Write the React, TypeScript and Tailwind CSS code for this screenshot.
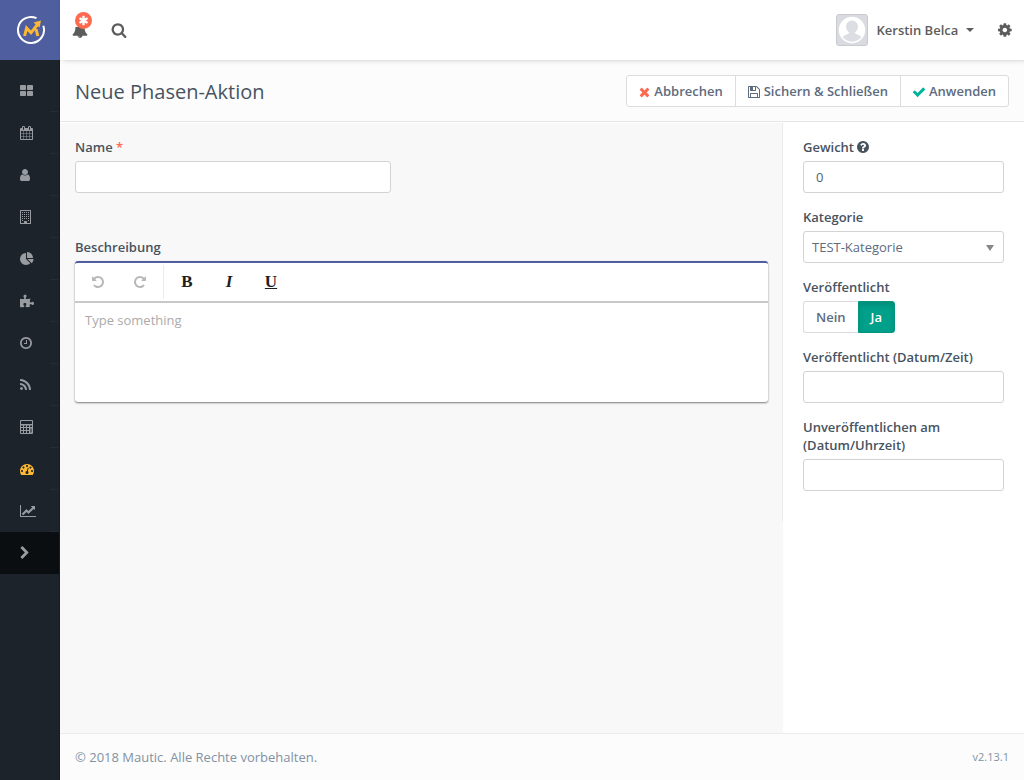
import { useState } from 'react'
import type { ReactNode } from 'react'
import { FaPuzzlePiece } from 'react-icons/fa'

type IconProps = { d: string; x?: number; w?: number; size?: number; className?: string }

// Icons are drawn on a 1792 unit grid, x and w trim the empty sides
function Icon({ d, x = 0, w = 1792, size = 14, className = '' }: IconProps) {
  return (
    <svg
      viewBox={`${x} 0 ${w} 1792`}
      height={size}
      width={(w / 1792) * size}
      fill="currentColor"
      fillRule="evenodd"
      aria-hidden="true"
      className={`shrink-0 ${className}`}
    >
      <path d={d} />
    </svg>
  )
}

const paths = {
  large:
    'M832 1024v384q0 52-38 90t-90 38h-512q-52 0-90-38t-38-90v-384q0-52 38-90t90-38h512q52 0 90 38t38 90zm0-768v384q0 52-38 90t-90 38h-512q-52 0-90-38t-38-90v-384q0-52 38-90t90-38h512q52 0 90 38t38 90zm896 768v384q0 52-38 90t-90 38h-512q-52 0-90-38t-38-90v-384q0-52 38-90t90-38h512q52 0 90 38t38 90zm0-768v384q0 52-38 90t-90 38h-512q-52 0-90-38t-38-90v-384q0-52 38-90t90-38h512q52 0 90 38t38 90z',
  calendar:
    'M192 1664h288v-288h-288v288zm352 0h320v-288h-320v288zm-352-352h288v-320h-288v320zm352 0h320v-320h-320v320zm-352-384h288v-288h-288v288zm736 736h320v-288h-320v288zm-384-736h320v-288h-320v288zm768 736h288v-288h-288v288zm-384-352h320v-320h-320v320zm-352-864v-288q0-13-9.5-22.5t-22.5-9.5h-64q-13 0-22.5 9.5t-9.5 22.5v288q0 13 9.5 22.5t22.5 9.5h64q13 0 22.5-9.5t9.5-22.5zm736 864h288v-320h-288v320zm-384-384h320v-288h-320v288zm384 0h288v-288h-288v288zm32-480v-288q0-13-9.5-22.5t-22.5-9.5h-64q-13 0-22.5 9.5t-9.5 22.5v288q0 13 9.5 22.5t22.5 9.5h64q13 0 22.5-9.5t9.5-22.5zm384-64v1280q0 52-38 90t-90 38h-1408q-52 0-90-38t-38-90v-1280q0-52 38-90t90-38h128v-96q0-66 47-113t113-47h64q66 0 113 47t47 113v96h384v-96q0-66 47-113t113-47h64q66 0 113 47t47 113v96h128q52 0 90 38t38 90z',
  user: 'M1536 1399q0 109-62.5 187t-150.5 78h-854q-88 0-150.5-78t-62.5-187q0-85 8.5-160.5t31.5-152 58.5-131 94-89 134.5-34.5q131 128 313 128t313-128q76 0 134.5 34.5t94 89 58.5 131 31.5 152 8.5 160.5zm-256-887q0 159-112.5 271.5t-271.5 112.5-271.5-112.5-112.5-271.5 112.5-271.5 271.5-112.5 271.5 112.5 112.5 271.5z',
  pie: 'M768 890l546 546q-106 108-247.5 168t-298.5 60q-209 0-385.5-103t-279.5-279.5-103-385.5 103-385.5 279.5-279.5 385.5-103v762zm187 6h773q0 157-60 298.5t-168 247.5zm709-128h-768v-768q209 0 385.5 103t279.5 279.5 103 385.5z',
  clock:
    'M1024 544v448q0 14-9 23t-23 9h-320q-14 0-23-9t-9-23v-64q0-14 9-23t23-9h224v-352q0-14 9-23t23-9h64q14 0 23 9t9 23zm416 352q0-148-73-273t-198-198-273-73-273 73-198 198-73 273 73 273 198 198 273 73 273-73 198-198 73-273zm224 0q0 209-103 385.5t-279.5 279.5-385.5 103-385.5-103-279.5-279.5-103-385.5 103-385.5 279.5-279.5 385.5-103 385.5 103 279.5 279.5 103 385.5z',
  rss: 'M576 1344q0 80-56 136t-136 56-136-56-56-136 56-136 136-56 136 56 56 136zm512 123q2 28-17 48-18 21-47 21h-135q-25 0-43-16.5t-20-41.5q-22-229-184.5-391.5t-391.5-184.5q-25-2-41.5-20t-16.5-43v-135q0-29 21-47 17-17 43-17h5q160 13 306 80.5t259 181.5q114 113 181.5 259t80.5 306zm512 2q2 27-18 47-18 20-46 20h-143q-26 0-44.5-17.5t-19.5-42.5q-12-215-101-408.5t-231.5-336-336-231.5-408.5-102q-25-1-42.5-19.5t-17.5-43.5v-143q0-28 20-46 18-18 44-18h3q262 13 501.5 120t425.5 294q187 186 294 425.5t120 501.5z',
  gauge:
    'M384 1152q0-53-37.5-90.5t-90.5-37.5-90.5 37.5-37.5 90.5 37.5 90.5 90.5 37.5 90.5-37.5 37.5-90.5zm192-448q0-53-37.5-90.5t-90.5-37.5-90.5 37.5-37.5 90.5 37.5 90.5 90.5 37.5 90.5-37.5 37.5-90.5zm428 481l101-382q6-26-7.5-48.5t-38.5-29.5-48 6.5-30 39.5l-101 382q-60 5-107 43.5t-63 98.5q-20 77 20 146t117 89 146-20 89-117q16-60-6-117t-72-91zm660-33q0-53-37.5-90.5t-90.5-37.5-90.5 37.5-37.5 90.5 37.5 90.5 90.5 37.5 90.5-37.5 37.5-90.5zm-640-640q0-53-37.5-90.5t-90.5-37.5-90.5 37.5-37.5 90.5 37.5 90.5 90.5 37.5 90.5-37.5 37.5-90.5zm448 192q0-53-37.5-90.5t-90.5-37.5-90.5 37.5-37.5 90.5 37.5 90.5 90.5 37.5 90.5-37.5 37.5-90.5zm320 448q0 261-141 483-19 29-54 29h-1402q-35 0-54-29-141-221-141-483 0-182 71-348t191-286 286-191 348-71 348 71 286 191 191 286 71 348z',
  line: 'M2048 1536v128h-2048v-1536h128v1408h1920zm-128-1248v435q0 21-19.5 29.5t-35.5-7.5l-121-121-633 633q-10 10-23 10t-23-10l-233-233-416 416-192-192 585-585q10-10 23-10t23 10l233 233 464-464-121-121q-16-16-7.5-35.5t29.5-19.5h435q14 0 23 9t9 23z',
  chevron:
    'M1363 877l-742 742q-19 19-45 19t-45-19l-166-166q-19-19-19-45t19-45l531-531-531-531q-19-19-19-45t19-45l166-166q19-19 45-19t45 19l742 742q19 19 19 45t-19 45z',
  search:
    'M1216 832q0-185-131.5-316.5t-316.5-131.5-316.5 131.5-131.5 316.5 131.5 316.5 316.5 131.5 316.5-131.5 131.5-316.5zm512 832q0 52-38 90t-90 38q-54 0-90-38l-343-342q-179 124-399 124-143 0-273.5-55.5t-225-150-150-225-55.5-273.5 55.5-273.5 150-225 225-150 273.5-55.5 273.5 55.5 225 150 150 225 55.5 273.5q0 220-124 399l343 343q37 37 37 90z',
  bell: 'M912 1696q0-16-16-16-59 0-101.5-42.5t-42.5-101.5q0-16-16-16t-16 16q0 73 51.5 124.5t124.5 51.5q16 0 16-16zm816-288q0 52-38 90t-90 38h-448q0 106-75 181t-181 75-181-75-75-181h-448q-52 0-90-38t-38-90q50-42 91-88t85-119.5 74.5-158.5 50-206 19.5-260q0-152 117-282.5t307-158.5q-8-19-8-39 0-40 28-68t68-28 68 28 28 68q0 20-8 39 190 28 307 158.5t117 282.5q0 139 19.5 260t50 206 74.5 158.5 85 119.5 91 88z',
  asterisk:
    'M1546 1050q46 26 59.5 77.5t-12.5 97.5l-64 110q-26 46-77.5 59.5t-97.5-12.5l-266-153v307q0 52-38 90t-90 38h-128q-52 0-90-38t-38-90v-307l-266 153q-46 26-97.5 12.5t-77.5-59.5l-64-110q-26-46-12.5-97.5t59.5-77.5l266-154-266-154q-46-26-59.5-77.5t12.5-97.5l64-110q26-46 77.5-59.5t97.5 12.5l266 153v-307q0-52 38-90t90-38h128q52 0 90 38t38 90v307l266-153q46-26 97.5-12.5t77.5 59.5l64 110q26 46 12.5 97.5t-59.5 77.5l-266 154z',
  cog: 'M1152 896q0-106-75-181t-181-75-181 75-75 181 75 181 181 75 181-75 75-181zm512-109v222q0 12-8 23t-20 13l-185 28q-19 54-39 91 35 50 107 138 10 12 10 25t-9 23q-27 37-99 108t-94 71q-12 0-26-9l-138-108q-44 23-91 38-16 136-29 186-7 28-36 28h-222q-14 0-24.5-8.5t-11.5-21.5l-28-184q-49-16-90-37l-141 107q-10 9-25 9-14 0-25-11-126-114-165-168-7-10-7-23 0-12 8-23 15-21 51-66.5t54-70.5q-27-50-41-99l-183-27q-13-2-21-12.5t-8-23.5v-222q0-12 8-23t19-13l186-28q14-46 39-92-40-57-107-138-10-12-10-24 0-10 9-23 26-36 98.5-107.5t94.5-71.5q13 0 26 10l138 107q44-23 91-38 16-136 29-186 7-28 36-28h222q14 0 24.5 8.5t11.5 21.5l28 184q49 16 90 37l142-107q9-9 24-9 13 0 25 10 129 119 165 170 7 8 7 22 0 12-8 23-15 21-51 66.5t-54 70.5q26 50 41 98l183 28q13 2 21 12.5t8 23.5z',
  times:
    'M1490 1322q0 40-28 68l-136 136q-28 28-68 28t-68-28l-294-294-294 294q-28 28-68 28t-68-28l-136-136q-28-28-28-68t28-68l294-294-294-294q-28-28-28-68t28-68l136-136q28-28 68-28t68 28l294 294 294-294q28-28 68-28t68 28l136 136q28 28 28 68t-28 68l-294 294 294 294q28 28 28 68z',
  check:
    'M1671 566q0 40-28 68l-724 724-136 136q-28 28-68 28t-68-28l-136-136-362-362q-28-28-28-68t28-68l136-136q28-28 68-28t68 28l294 295 656-657q28-28 68-28t68 28l136 136q28 28 28 68z',
  floppy:
    'M512 1536h768v-384h-768v384zm896 0h128v-896q0-14-10-38.5t-20-34.5l-281-281q-10-10-34-20t-39-10v416q0 40-28 68t-68 28h-576q-40 0-68-28t-28-68v-416h-128v1280h128v-416q0-40 28-68t68-28h832q40 0 68 28t28 68v416zm-384-928v-320q0-13-9.5-22.5t-22.5-9.5h-192q-13 0-22.5 9.5t-9.5 22.5v320q0 13 9.5 22.5t22.5 9.5h192q13 0 22.5-9.5t9.5-22.5zm640 32v928q0 40-28 68t-68 28h-1344q-40 0-68-28t-28-68v-1344q0-40 28-68t68-28h928q40 0 88 20t76 48l280 280q28 28 48 76t20 88z',
  question:
    'M1024 1376v-192q0-14-9-23t-23-9h-192q-14 0-23 9t-9 23v192q0 14 9 23t23 9h192q14 0 23-9t9-23zm256-672q0-88-55.5-163t-138.5-116-170-41q-243 0-371 213-15 24 8 42l132 100q7 6 19 6 16 0 25-12 53-68 86-92 34-24 86-24 48 0 85.5 26t37.5 59q0 38-20 61t-68 45q-63 28-115.5 86.5t-52.5 125.5v36q0 14 9 23t23 9h192q14 0 23-9t9-23q0-19 21.5-49.5t54.5-49.5q32-18 49-28.5t46-35 44.5-48 28-60.5 12.5-81zm384 192q0 209-103 385.5t-279.5 279.5-385.5 103-385.5-103-279.5-279.5-103-385.5 103-385.5 279.5-279.5 385.5-103 385.5 103 279.5 279.5 103 385.5z',
  undo: 'M1664 896q0 156-61 298t-164 245-245 164-298 61q-172 0-327-72.5t-264-204.5q-7-10-6.5-22.5t8.5-20.5l137-138q10-9 25-9 16 2 23 12 73 95 179 147t225 52q104 0 198.5-40.5t163.5-109.5 109.5-163.5 40.5-198.5-40.5-198.5-109.5-163.5-163.5-109.5-198.5-40.5q-98 0-188 35.5t-160 101.5l137 138q31 30 14 69-17 40-59 40h-448q-26 0-45-19t-19-45v-448q0-42 40-59 39-17 69 14l130 129q107-101 244.5-156.5t284.5-55.5q156 0 298 61t245 164 164 245 61 298z',
}

function BuildingIcon() {
  return (
    <svg width="11" height="14" viewBox="0 0 11 14" fill="currentColor" aria-hidden="true">
      <path
        fillRule="evenodd"
        d="M.5 0h10q.5 0 .5.5v13q0 .5-.5.5H.5q-.5 0-.5-.5V.5Q0 0 .5 0zM1 1v12h3v-1.500q0-.5.5-.5h2q.5 0 .5.5V13h3V1z"
      />
      {[2, 4, 6, 8].map((y) =>
        [2, 4, 6, 8].map((x) => <rect key={`${x}-${y}`} x={x} y={y} width="1" height="1" />)
      )}
      <rect x="2" y="10" width="1" height="1" />
      <rect x="8" y="10" width="1" height="1" />
    </svg>
  )
}

function CalculatorIcon() {
  return (
    <svg width="13" height="14" viewBox="0 0 13 14" fill="currentColor" aria-hidden="true">
      <path
        fillRule="evenodd"
        d="M1 0h11q1 0 1 1v12q0 1-1 1H1q-1 0-1-1V1q0-1 1-1zM1.500 1Q1 1 1 1.500V4h11V1.500q0-.5-.5-.5zM1 5.500v1.500h2V5.500zM4 5.500v1.500h2V5.500zM7 5.500v1.500h2V5.500zM10 5.500v1.500h2V5.500zM1 8v2h2V8zM4 8v2h2V8zM7 8v2h2V8zM1 11v2h2v-2zM4 11v2h2v-2zM7 11v2h2v-2zM10.500 8.500v4h1v-4z"
      />
    </svg>
  )
}

const menuItems: { name: string; icon: ReactNode }[] = [
  { name: 'Dashboard', icon: <Icon d={paths.large} x={64} w={1664} /> },
  { name: 'Kalender', icon: <Icon d={paths.calendar} x={64} w={1664} /> },
  { name: 'Kontakte', icon: <Icon d={paths.user} x={256} w={1280} /> },
  { name: 'Firmen', icon: <BuildingIcon /> },
  { name: 'Segmente', icon: <Icon d={paths.pie} /> },
  { name: 'Komponenten', icon: <FaPuzzlePiece size={14} /> },
  { name: 'Kampagnen', icon: <Icon d={paths.clock} x={128} w={1536} /> },
  { name: 'Kanäle', icon: <Icon d={paths.rss} x={192} w={1408} /> },
  { name: 'Punkte', icon: <CalculatorIcon /> },
  { name: 'Phasen', icon: <Icon d={paths.gauge} className="text-[#fdb933]" /> },
  { name: 'Berichte', icon: <Icon d={paths.line} w={2048} /> },
]

function Sidebar() {
  return (
    <aside className="flex w-[60px] shrink-0 flex-col border-r border-[#171c22] bg-[#1d232b] text-[#989ca1]">
      <a
        href="#home"
        aria-label="Mautic"
        className="-mr-px flex h-[60px] items-center justify-center bg-[#4e5e9e] pl-[2px]"
      >
        <svg width="30" height="30" viewBox="0 0 30 30" fill="none" aria-hidden="true">
          <path d="M20.500 3.200A13 13 0 1 0 27.300 10.800" stroke="#fff" strokeWidth="2" />
          <path
            d="M8.600 21L10.600 13L15 17.800L21.500 9.500M20 14L21.800 21"
            stroke="#fdb933"
            strokeWidth="3"
          />
          <path d="M17.500 7.500L25 5.500L23.500 12.500z" fill="#fdb933" />
        </svg>
      </a>
      <nav className="pt-[10px]">
        <ul>
          {menuItems.map((item) => (
            <li key={item.name} className="flex flex-col">
              <a
                href="#menu"
                aria-label={item.name}
                className="flex h-[41px] items-center pt-px pl-5"
              >
                {item.icon}
              </a>
              <span className="mr-px ml-auto h-px w-2 bg-[#262c34]" />
            </li>
          ))}
        </ul>
        <button
          type="button"
          aria-label="Menü ausklappen"
          className="flex h-[42px] w-full items-center bg-[#0b0e11] pl-5"
        >
          <Icon d={paths.chevron} x={280} w={1152} />
        </button>
      </nav>
    </aside>
  )
}

function Topbar() {
  return (
    <header className="z-10 flex h-[60px] items-center justify-between bg-white px-3 text-[#5c5c5c] shadow-[3px_0_5px_rgba(0,0,0,0.22)]">
      <div className="flex items-center gap-[23px]">
        <button type="button" aria-label="Benachrichtigungen" className="relative">
          <Icon d={paths.bell} size={16} className="[clip-path:inset(5px_0_0_0)]" />
          <span className="absolute -top-[10px] left-[3px] flex size-[17px] items-center justify-center rounded-full bg-[#fd6a50] text-white">
            <Icon d={paths.asterisk} size={11} />
          </span>
        </button>
        <button type="button" aria-label="Suche">
          <Icon d={paths.search} size={16} />
        </button>
      </div>
      <div className="flex items-center gap-6">
        <button type="button" className="flex items-center gap-2 text-[13px] font-semibold">
          <svg width="32" height="32" viewBox="0 0 32 32" aria-hidden="true">
            <rect x=".5" y=".5" width="31" height="31" rx="2.500" fill="#d9dbe0" stroke="#c9cacf" />
            <circle cx="16" cy="16" r="12.500" fill="#dcdee3" stroke="#fff" strokeWidth="1.500" />
            <path
              fill="#fff"
              d="M16 3.500a12.500 12.500 0 0 0-10 20c2-2.500 5-3 7.500-4.500-2-1.500-3.500-4-3.500-6.500a6 6 0 0 1 12 0c0 2.500-1.500 5-3.500 6.500 2.500 1.500 5.500 2 7.500 4.500A12.500 12.500 0 0 0 16 3.500z"
            />
          </svg>
          <span className="pt-[2px]">Kerstin Belca</span>
          <span className="border-x-4 border-t-4 border-x-transparent border-t-current" />
        </button>
        <button type="button" aria-label="Einstellungen">
          <Icon d={paths.cog} size={16} x={128} w={1536} />
        </button>
      </div>
    </header>
  )
}

function Field({ id, label, children }: { id: string; label: ReactNode; children: ReactNode }) {
  return (
    <div className="mb-[15px]">
      <label htmlFor={id} className="mb-[5px] block leading-[18px] font-semibold text-[#47535f]">
        {label}
      </label>
      {children}
    </div>
  )
}

const inputClass =
  'block h-8 w-full rounded-[3px] border border-[#d3d3d3] bg-white px-3 text-[13px] text-[#54606e] outline-none'

function Editor() {
  return (
    <div className="rounded-[3px] border-t-2 border-[#4e5e9e] bg-white shadow-[0_1px_2px_rgba(0,0,0,0.5)]">
      <div className="flex h-[38px] items-center text-[#1e1e1e]">
        <div className="flex border-r border-[#ebebeb] py-2">
          <button
            type="button"
            disabled
            aria-label="Rückgängig"
            className="flex h-[18px] w-[42px] items-center justify-center pl-1 text-[#b8b8b8]"
          >
            <Icon d={paths.undo} size={14} />
          </button>
          <button
            type="button"
            disabled
            aria-label="Wiederholen"
            className="flex h-[18px] w-[46px] items-center justify-center text-[#b8b8b8]"
          >
            <Icon d={paths.undo} size={14} className="-scale-x-100" />
          </button>
        </div>
        <div className="flex pl-[2px] font-['Liberation_Serif',serif] text-[17px] leading-[20px] font-bold">
          <button type="button" aria-label="Fett" className="w-[42px]">
            B
          </button>
          <button type="button" aria-label="Kursiv" className="w-[42px] italic">
            I
          </button>
          <button type="button" aria-label="Unterstrichen" className="w-[42px] underline">
            U
          </button>
        </div>
      </div>
      <textarea
        id="description"
        placeholder="Type something"
        className="block h-[101px] w-full resize-none rounded-b-[3px] border-t-2 border-[#c8c8c8] px-[10px] py-2 text-[13px] leading-[18px] outline-none placeholder:text-[#aaaaaa]"
      />
    </div>
  )
}

function App() {
  const [published, setPublished] = useState(true)

  return (
    <div className="flex min-h-screen bg-[#f8f8f8] font-['Open_Sans',sans-serif] text-[13px]">
      <Sidebar />
      <div className="flex min-w-0 flex-1 flex-col">
        <Topbar />
        <div className="flex items-center justify-between border-b border-[#e6e6e6] bg-[#fcfcfc] px-[15px] pt-[15px] pb-[14px]">
          <h1 className="pt-[2px] text-[20px] leading-[28px] text-[#47535f]">Neue Phasen-Aktion</h1>
          <div className="flex h-8 divide-x divide-[#dcdcdc] rounded-[3px] border border-[#dcdcdc] bg-white font-semibold text-[#5d6b7d]">
            <button type="button" className="flex items-center gap-1 px-3 pt-px">
              <Icon d={paths.times} x={192} w={1408} className="text-[#fd6a50]" />
              Abbrechen
            </button>
            <button type="button" className="flex items-center gap-1 px-3 pt-px">
              <Icon d={paths.floppy} x={128} w={1536} />
              Sichern &amp; Schließen
            </button>
            <button type="button" className="flex items-center gap-1 px-3 pt-px">
              <Icon d={paths.check} x={128} w={1536} className="text-[#00b49c]" />
              Anwenden
            </button>
          </div>
        </div>

        <main className="flex flex-1 border-t border-white">
          <div className="w-3/4 px-[15px] pt-[15px]">
            <div className="w-1/2 pr-[31px] pb-[30px]">
              <Field
                id="name"
                label={
                  <>
                    Name <span className="text-[#fd6a50]">*</span>
                  </>
                }
              >
                <input id="name" type="text" className={inputClass} />
              </Field>
            </div>
            <Field id="description" label="Beschreibung">
              <Editor />
            </Field>
          </div>

          <div className="w-1/4 bg-white">
            <div className="-ml-px border-l border-[#ebebeb] px-5 py-[15px]">
              <Field
                id="weight"
                label={
                  <span className="flex items-center gap-[3px]">
                    Gewicht
                    <Icon d={paths.question} x={128} w={1536} />
                  </span>
                }
              >
                <input id="weight" type="text" defaultValue="0" className={inputClass} />
              </Field>
              <Field id="category" label="Kategorie">
                <div className="relative">
                  <select
                    id="category"
                    className="block h-8 w-full appearance-none rounded-[3px] border border-[#d3d3d3] bg-white px-2 pt-[2px] text-[13px] text-[#5d6b7d] outline-none"
                  >
                    <option>TEST-Kategorie</option>
                  </select>
                  <span className="pointer-events-none absolute top-[14px] right-[10px] border-x-4 border-t-6 border-x-transparent border-t-[#888888]" />
                </div>
              </Field>
              <fieldset className="mb-[15px]">
                <legend className="mb-[5px] leading-[18px] font-semibold text-[#47535f]">
                  Veröffentlicht
                </legend>
                <div className="flex h-8 font-semibold text-[#5d6b7d]">
                  <label className="flex cursor-pointer items-center rounded-l-[3px] border border-r-0 border-[#dcdcdc] bg-white px-3 pt-px has-checked:border-[#00967f] has-checked:bg-[#00a08a] has-checked:text-white">
                    <input
                      type="radio"
                      name="published"
                      className="sr-only"
                      checked={!published}
                      onChange={() => setPublished(false)}
                    />
                    Nein
                  </label>
                  <label className="flex cursor-pointer items-center rounded-r-[3px] border border-[#dcdcdc] bg-white px-3 pt-px has-checked:border-[#00967f] has-checked:bg-[#00a08a] has-checked:text-white has-checked:shadow-[inset_0_3px_5px_rgba(0,0,0,0.125)]">
                    <input
                      type="radio"
                      name="published"
                      className="sr-only"
                      checked={published}
                      onChange={() => setPublished(true)}
                    />
                    Ja
                  </label>
                </div>
              </fieldset>
              <Field id="publish-up" label="Veröffentlicht (Datum/Zeit)">
                <input id="publish-up" type="text" className={inputClass} />
              </Field>
              <Field id="publish-down" label="Unveröffentlichen am (Datum/Uhrzeit)">
                <input id="publish-down" type="text" className={inputClass} />
              </Field>
            </div>
          </div>
        </main>

        <footer className="flex h-[47px] items-center justify-between border-t border-[#ebebeb] bg-[#fcfcfc] px-[15px] pt-px text-[#8392a3]">
          <p>© 2018 Mautic. Alle Rechte vorbehalten.</p>
          <p className="text-[11px]">v2.13.1</p>
        </footer>
      </div>
    </div>
  )
}

export default App
